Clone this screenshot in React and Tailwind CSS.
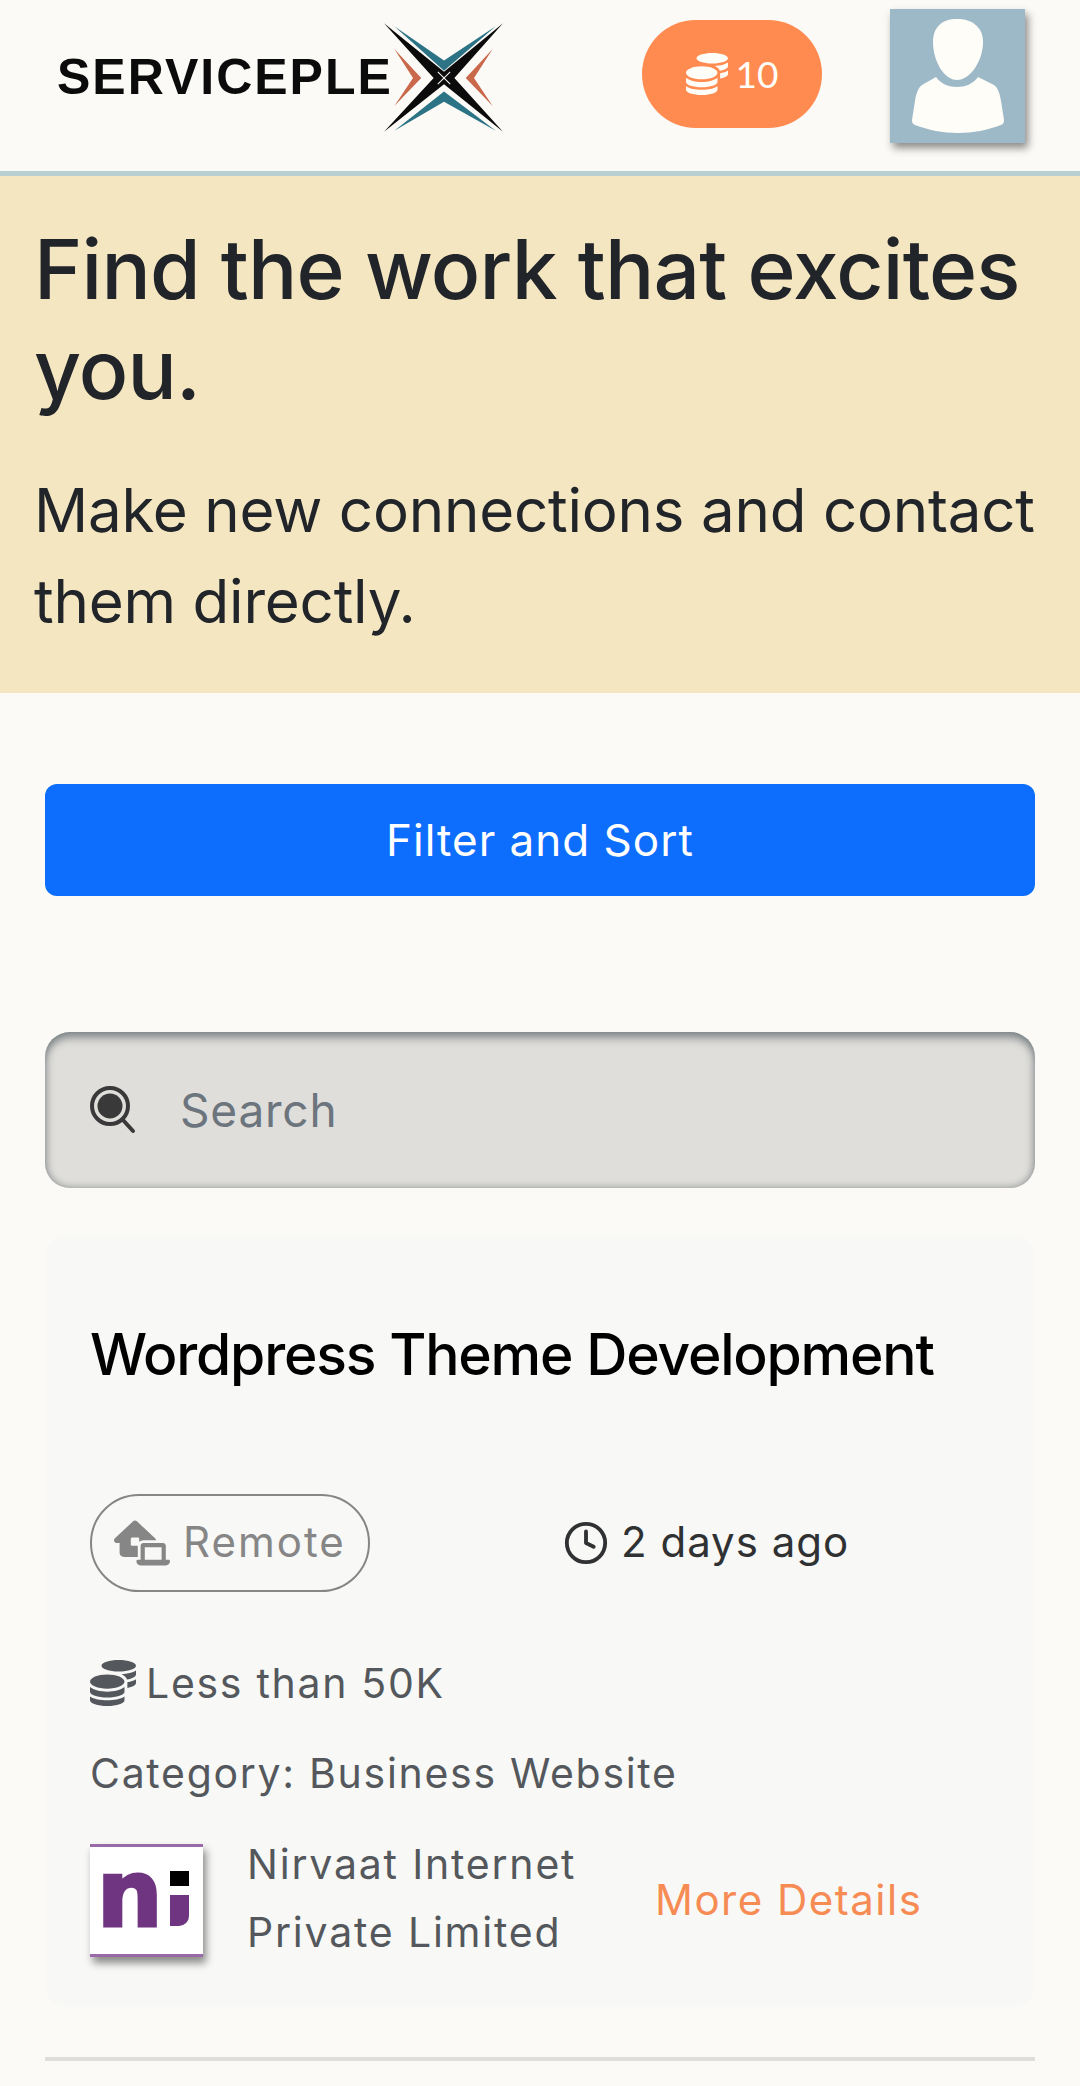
import { FaCoins } from 'react-icons/fa'
import { FaHouseLaptop } from 'react-icons/fa6'
import { FiClock } from 'react-icons/fi'

function LogoMark() {
  return (
    <svg viewBox="0 0 115 105" className="w-[119px] h-[109px] shrink-0">
      <polygon points="10,3 58,36 108,3 58,46" fill="#2b7385" />
      <polygon points="10,104 58,66 108,104 58,76" fill="#2b7385" />
      <polygon points="10,25 36,53 10,80 28,53" fill="#c9684a" />
      <polygon points="105,25 79,53 105,80 87,53" fill="#c9684a" />
      <polygon points="0,0 58,47 115,0 68,53 115,105 58,59 0,105 48,53" fill="#0b0b0b" />
      <line x1="52" y1="47" x2="64" y2="59" stroke="#fbfaf6" strokeWidth="1" />
      <line x1="64" y1="47" x2="52" y2="59" stroke="#fbfaf6" strokeWidth="1" />
    </svg>
  )
}

function Avatar() {
  return (
    <div className="w-[135px] h-[134px] bg-[#9db9c8] shadow-[3px_5px_8px_rgba(0,0,0,0.45)] shrink-0">
      <svg viewBox="0 0 135 134" className="w-[135px] h-[134px]">
        <path d="M67 10C52 10 43 18 43 33C43 52 54 71 67 71C80 71 93 52 93 33C93 18 82 10 67 10Z" fill="#fefdf8" />
        <path d="M46 68C51 75 59 78 67 78C75 78 83 75 88 68L104 76C108 79 110 85 111 92L114 111C114 114 113 115 111 116C98 121 83 124 68 124C53 124 38 121 25 116C23 115 22 114 22 111L25 92C26 85 28 79 32 76Z" fill="#fefdf8" />
      </svg>
    </div>
  )
}

function SearchIcon() {
  return (
    <svg viewBox="0 0 46 48" className="w-[46px] h-[48px] shrink-0">
      <circle cx="20" cy="20" r="18" fill="none" stroke="#393939" strokeWidth="4" />
      <circle cx="20" cy="20" r="12.5" fill="#393939" />
      <line x1="33" y1="34" x2="43" y2="45" stroke="#393939" strokeWidth="4" strokeLinecap="round" />
    </svg>
  )
}

function NiLogo() {
  return (
    <div className="relative w-[113px] h-[113px] bg-white border-y-[3px] border-[#9a6aa8] shadow-[3px_6px_8px_rgba(0,0,0,0.45)] shrink-0 font-['DejaVu_Sans',sans-serif] font-bold text-[#6f3580] text-[92px] leading-[100px]">
      <span className="absolute left-[7px] top-[-2px] [-webkit-text-stroke:3px_#6f3580]">n</span>
      <div className="absolute left-[80px] top-[24px] w-[19px] h-[15px] bg-black" />
      <div className="absolute left-[80px] top-[48px] w-[19px] h-[31px] bg-[#6f3580] rounded-br-[10px]" />
    </div>
  )
}

export default function App() {
  return (
    <div className="w-[1080px] h-[2086px] overflow-hidden bg-[#fbfaf6] font-['Inter',sans-serif]">
      <header className="h-[176px] border-b-[5px] border-[#b9d0d3] flex items-center pl-[57px] pr-[55px]">
        <div className="flex items-center w-[450px] -mt-[17px]">
          <span className="font-['Liberation_Sans',sans-serif] font-bold text-[50px] leading-none tracking-[2px] text-[#0b0b0b] w-[327px] whitespace-nowrap">SERVICEPLE</span>
          <LogoMark />
        </div>
        <div className="ml-[135px] w-[180px] h-[108px] -mt-[23px] rounded-full bg-[#ff8b50] text-[#fffdf8] flex items-center justify-center gap-[8px] text-[37px] font-['Lato',sans-serif]">
          <FaCoins className="w-[42px] h-[42px]" />
          <span>10</span>
        </div>
        <div className="ml-[68px] -mt-[20px]"><Avatar /></div>
      </header>

      <section className="h-[517px] bg-[#f4e6c1] px-[34px] text-[#212529] pt-[44px]">
        <h1 className="font-medium text-[82px] leading-[100px] tracking-[-0.8px]">Find the work that excites you.</h1>
        <p className="mt-[45px] text-[60px] leading-[91px] tracking-[-0.2px] whitespace-nowrap">Make new connections and contact<br />them directly.</p>
      </section>

      <main className="px-[45px]">
        <button className="mt-[91px] w-full h-[112px] rounded-[12px] bg-[#0d6efd] text-white text-[44px] tracking-[1px]">Filter and Sort</button>

        <div className="mt-[136px] h-[156px] rounded-[25px] bg-[#dfdedb] shadow-[inset_0_8px_9px_-2px_rgba(70,80,85,0.55),inset_5px_0_7px_-2px_rgba(70,80,85,0.25),inset_-5px_0_7px_-2px_rgba(70,80,85,0.25),inset_0_-4px_6px_-2px_rgba(70,80,85,0.2)] flex items-center pl-[45px]">
          <SearchIcon />
          <span className="ml-[44px] text-[46px] text-[#6c757d] tracking-[0.8px]">Search</span>
        </div>

        <article className="mt-[47px] h-[772px] rounded-[22px] bg-[#f8f8f6] px-[45px]">
          <h2 className="pt-[82px] font-medium text-[57px] leading-[76px] tracking-[-1.2px] text-black whitespace-nowrap">Wordpress Theme Development</h2>

          <div className="mt-[101px] flex items-center">
            <div className="w-[280px] h-[98px] rounded-full border-2 border-[#868686] flex items-center pl-[22px] gap-[13px] text-[#868686] text-[42px] tracking-[2px]">
              <FaHouseLaptop className="w-[56px] h-[46px]" />
              <span className="-mt-[3px]">Remote</span>
            </div>
            <div className="ml-[193px] flex items-center gap-[12px] text-[#2f3133] text-[42px] tracking-[1px]">
              <FiClock className="w-[46px] h-[46px]" />
              <span className="-mt-[3px]">2 days ago</span>
            </div>
          </div>

          <div className="mt-[46px] flex items-center gap-[10px] text-[#54585c] text-[41px] leading-[90px] tracking-[1.7px]">
            <FaCoins className="w-[46px] h-[46px]" />
            <span>Less than 50K</span>
          </div>
          <div className="text-[#54585c] text-[41px] leading-[90px] tracking-[1.7px]">Category: Business Website</div>

          <div className="mt-[16px] flex items-center">
            <NiLogo />
            <div className="ml-[44px] -mt-[4px] w-[350px] text-[#54585c] text-[41px] leading-[68px] tracking-[1.8px]">Nirvaat Internet Private Limited</div>
            <span className="ml-[58px] -mt-[2px] text-[#f78b54] text-[42px] tracking-[1.5px] whitespace-nowrap">More Details</span>
          </div>
        </article>

        <div className="mt-[50px] h-[4px] bg-[#dfdeda]" />
      </main>
    </div>
  )
}
